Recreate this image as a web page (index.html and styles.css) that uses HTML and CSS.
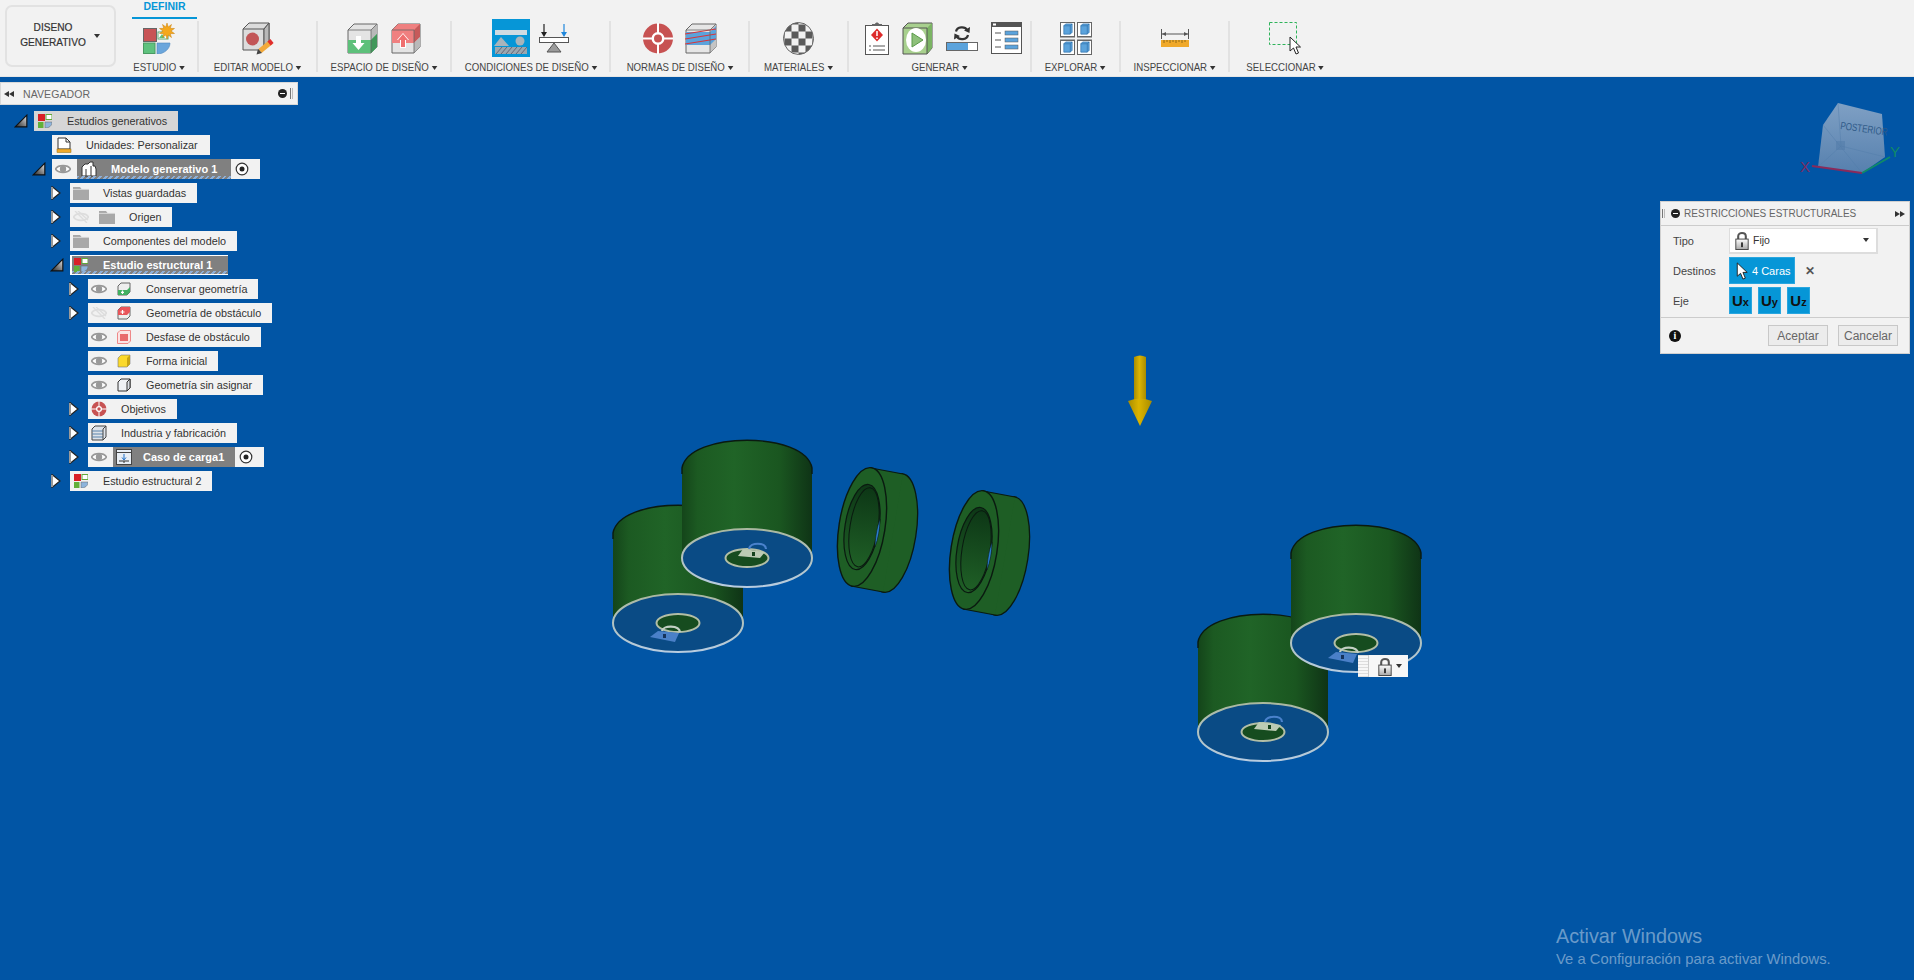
FILE: index.html
```html
<!DOCTYPE html>
<html lang="es">
<head>
<meta charset="utf-8">
<title>Diseño generativo</title>
<link rel="stylesheet" href="styles.css">
</head>
<body>
<svg class="defs" width="0" height="0" aria-hidden="true">
  <defs>
    <symbol id="eye" viewBox="0 0 16 12"><path d="M0.5 6C3 1.5 13 1.5 15.5 6C13 10.5 3 10.5 0.5 6Z" fill="#fff" stroke="#999" stroke-width="1.6"/><circle cx="8" cy="6" r="3.2" fill="#999"/></symbol>
    <symbol id="eye-off" viewBox="0 0 16 12"><path d="M0.5 6C3 1.5 13 1.5 15.5 6C13 10.5 3 10.5 0.5 6Z" fill="#f1f1f1" stroke="#ddd" stroke-width="1.6"/><path d="M2 0L14 12M5 0L15 9" stroke="#ddd" stroke-width="1.4"/></symbol>
    <symbol id="folder" viewBox="0 0 16 14"><path d="M0 1H7L8.5 3H16V14H0Z" fill="#a8a8a8"/><path d="M0 3.4H16" stroke="#d8d8d8"/></symbol>
    <symbol id="open" viewBox="0 0 12 12" preserveAspectRatio="xMinYMid meet"><path d="M1 11L11 1V11Z" fill="url(#tri)" stroke="#111"/></symbol>
    <symbol id="closed" viewBox="0 0 11 14" preserveAspectRatio="xMinYMid meet"><path d="M2 0.5L10 7L2 13.500Z" fill="#fff" stroke="#222" stroke-width="1.2"/><path d="M2 1V13" stroke="#999" stroke-width="2"/></symbol>
    <symbol id="study" viewBox="0 0 14 14"><rect width="7" height="7" fill="#d92027"/><rect x="8" y="0.5" width="6" height="5" fill="#fff" stroke="#62a83a"/><rect y="8" width="5.5" height="6" fill="#62b03a"/><path d="M7 8H14C14 12 11 14 7 14Z" fill="#8db4dc" stroke="#666" stroke-width=".5"/></symbol>
    <symbol id="radio" viewBox="0 0 14 14"><circle cx="7" cy="7" r="5.8" fill="#fff" stroke="#333" stroke-width="1.2"/><circle cx="7" cy="7" r="2.5" fill="#222"/></symbol>
    <symbol id="lock" viewBox="0 0 14 20"><path d="M3 9V5.500C3 1 11 1 11 5.500V9" fill="none" stroke="#555" stroke-width="2.2"/><rect x="0.5" y="8.5" width="13" height="11" fill="url(#lockf)" stroke="#444"/><rect x="6" y="12" width="2" height="5" fill="#333"/></symbol>
    <symbol id="cursor" viewBox="0 0 12 19"><path d="M1 1V15L4.5 12L7 18L9.5 17L7 11H11.5Z" fill="#fff" stroke="#222" stroke-width="1"/></symbol>
    <symbol id="blue-cube" viewBox="0 0 14 14"><rect width="14" height="14" fill="#fff"/><path d="M3 3L5 1H12V10L10 12H3Z" fill="#5ba3dc" stroke="#2d6fa8" stroke-width=".7"/><path d="M3 3H10V12M10 3L12 1" fill="none" stroke="#2d6fa8" stroke-width=".7"/></symbol>
    <linearGradient id="tri" x1="0" y1="1" x2="1" y2="0"><stop offset="0" stop-color="#222"/><stop offset="1" stop-color="#e8e8e8"/></linearGradient>
    <linearGradient id="lockf" x1="0" y1="0" x2="0" y2="1"><stop offset="0" stop-color="#fff"/><stop offset="1" stop-color="#a8a8a8"/></linearGradient>
  </defs>
</svg>

<header class="toolbar">
  <div class="home">
    <button class="workspace"><span>DISENO<br>GENERATIVO</span><i class="caret wcaret"></i></button>
  </div>

  <section class="group g1">
    <div class="tab">DEFINIR</div>
    <div class="icons">
      <svg width="32" height="31" viewBox="0 0 32 31"><rect x=".5" y="5.5" width="13" height="13" fill="#c85456" stroke="#666"/><rect x="15" y="9" width="10" height="7" fill="#fff" stroke="#5fa870"/><path d="M16 15L19 11L22 15Z" fill="#5fc27e"/><rect x=".5" y="20" width="11.5" height="10.5" fill="#5fc27e" stroke="#4a9a62"/><path d="M14 20H27C27 26 21 31 14 31Z" fill="#6ba6dc" stroke="#4d86bd" stroke-width=".6"/><path d="M24 0L25.2 4L28.5 1.5L27.2 5.3L31.5 5.5L28 8L31.5 10.5L27.2 10.7L28.5 14.5L25.2 12L24 16L22.8 12L19.5 14.5L20.8 10.7L16.5 10.5L20 8L16.5 5.5L20.8 5.3L19.5 1.5L22.8 4Z" fill="#f5a81c" stroke="#c87f0a" stroke-width=".5"/></svg>
    </div>
    <div class="label">ESTUDIO<i class="caret"></i></div>
  </section>
  <div class="sep"></div>

  <section class="group g2">
    <div class="icons">
      <svg width="32" height="33" viewBox="0 0 32 33"><path d="M1 7L7 1H27V22L22 28H1Z" fill="#dcdcdc" stroke="#555"/><path d="M22 7H1M22 7V28M22 7L27 1" fill="none" stroke="#555"/><path d="M22 7L27 1V22L22 28Z" fill="#b8b8b8" stroke="#555"/><circle cx="10.500" cy="17" r="6.500" fill="#c25556"/><path d="M29 20L18 29" stroke="#f2a93b" stroke-width="5"/><path d="M30 19L27 21.500" stroke="#e02d2d" stroke-width="5"/><path d="M14.500 32.500L16 27L20 31Z" fill="#444"/></svg>
    </div>
    <div class="label">EDITAR MODELO<i class="caret"></i></div>
  </section>
  <div class="sep"></div>

  <section class="group g3">
    <div class="icons gap13">
      <svg width="31" height="31" viewBox="0 0 31 31"><path d="M1 7L7 1H30V24L24 30H1Z" fill="#e4e4e4" stroke="#666"/><path d="M24 7L30 1V24L24 30Z" fill="#b9b9b9"/><path d="M1 17H24L30 11V24L24 30H1Z" fill="#5dc07a"/><path d="M24 17L30 11V24L24 30Z" fill="#41975a"/><path d="M1 7H24V30M24 7L30 1" fill="none" stroke="#666" stroke-width=".8"/><path d="M9 13H14V20H17.500L11.500 27L5.500 20H9Z" fill="#fff"/></svg>
      <svg width="30" height="31" viewBox="0 0 30 31"><path d="M1 7L7 1H29V24L23 30H1Z" fill="#e4e4e4" stroke="#666"/><path d="M1 7L7 1H29V14L23 20H1Z" fill="#ef8080"/><path d="M23 7L29 1V14L23 20Z" fill="#c65a5a"/><path d="M23 20L29 14V24L23 30Z" fill="#b9b9b9"/><path d="M1 7H23V30" fill="none" stroke="#666" stroke-width=".8"/><path d="M12 10L18 17H15V25H9V17H6Z" fill="#fff"/><path d="M10 24V17H7L12 11L17 17H14V24Z" fill="#ef7070"/></svg>
    </div>
    <div class="label">ESPACIO DE DISEÑO<i class="caret"></i></div>
  </section>
  <div class="sep"></div>

  <section class="group g4">
    <div class="icons gap9">
      <svg width="38" height="38" viewBox="0 0 38 38"><rect width="38" height="38" fill="#0696d7"/><rect x="3" y="11" width="32" height="5" fill="#cfdbe2"/><path d="M9 18L17 27H2Z" fill="#a8b4bb"/><circle cx="28" cy="22" r="4.500" fill="#a8b4bb"/><rect x="3" y="28" width="32" height="7" fill="#9aa8b0"/><path d="M4 35L10 28M9 35L15 28M14 35L20 28M19 35L25 28M24 35L30 28M29 35L35 28" stroke="#667" stroke-width="1"/></svg>
      <svg width="30" height="30" viewBox="0 0 30 30"><path d="M5 1V12" stroke="#222" stroke-width="1.200"/><path d="M2 9H8L5 14Z" fill="#222"/><path d="M25 1V12" stroke="#1f87dc" stroke-width="1.200"/><path d="M22 9H28L25 14Z" fill="#1f87dc"/><rect x=".5" y="14.500" width="29" height="5" fill="#fff" stroke="#555"/><path d="M15 20L22 29H8Z" fill="#9a9a9a" stroke="#555"/></svg>
    </div>
    <div class="label">CONDICIONES DE DISEÑO<i class="caret"></i></div>
  </section>
  <div class="sep"></div>

  <section class="group g5">
    <div class="icons gap12">
      <svg width="30" height="31" viewBox="0 0 30 31"><circle cx="15" cy="15.500" r="15" fill="#c75252"/><path d="M15 0V31M0 15.500H30" stroke="#fff" stroke-width="2"/><circle cx="15" cy="15.500" r="6.500" fill="#fff"/><circle cx="15" cy="15.500" r="4" fill="#c75252"/></svg>
      <svg width="32" height="31" viewBox="0 0 32 31"><path d="M1 7L7 1H31V24L25 30H1Z" fill="#e6e6e6" stroke="#666"/><path d="M25 7L31 1V24L25 30Z" fill="#c4c4c4"/><path d="M1 9H25L31 3V16L25 22H1Z" fill="#5ba3dc"/><path d="M0 11L31 6M0 16L31 11M0 21L31 16" stroke="#d8343a" stroke-width="1.100"/><path d="M1 7H25V30M25 7L31 1" fill="none" stroke="#666" stroke-width=".8"/></svg>
    </div>
    <div class="label">NORMAS DE DISEÑO<i class="caret"></i></div>
  </section>
  <div class="sep"></div>

  <section class="group g6">
    <div class="icons">
      <svg width="33" height="33" viewBox="0 0 33 33"><defs><pattern id="chk" width="14" height="14" patternUnits="userSpaceOnUse" x="2.500" y="2.500"><rect width="14" height="14" fill="#f2f2f2"/><rect width="7" height="7" fill="#5a5a5a"/><rect x="7" y="7" width="7" height="7" fill="#5a5a5a"/></pattern></defs><ellipse cx="16.500" cy="16.500" rx="15" ry="16" fill="url(#chk)" stroke="#666"/></svg>
    </div>
    <div class="label">MATERIALES<i class="caret"></i></div>
  </section>
  <div class="sep"></div>

  <section class="group g7">
    <div class="icons gen">
      <svg width="24" height="33" viewBox="0 0 24 33"><rect x=".5" y="3.500" width="23" height="29" fill="#fff" stroke="#555"/><path d="M7 4V2H10C10.500 0 13.500 0 14 2H17V4Z" fill="#666"/><path d="M12 6.500L18 13L12 19.500L6 13Z" fill="#dd2a2a"/><path d="M12 9V14M12 15.500V17" stroke="#fff" stroke-width="1.500"/><path d="M4 24H6M8 24H20M4 28H6M8 28H20" stroke="#555"/></svg>
      <svg width="31" height="33" viewBox="0 0 31 33"><path d="M1 6L6 1H30V26L25 32H1Z" fill="#a8d08e" stroke="#555"/><path d="M25 6L30 1V26L25 32Z" fill="#7bb464"/><path d="M1 6H25V32" fill="none" stroke="#555"/><ellipse cx="14" cy="18" rx="10" ry="12" fill="#fff"/><path d="M10 11L21 18L10 25Z" fill="#8ec07a" stroke="#5a9a4a"/></svg>
      <svg width="32" height="26" viewBox="0 0 32 26"><path d="M10 6.500C11 1.500 19 1 21 5M22 10C21 15 13 15.500 11 11.500" fill="none" stroke="#333" stroke-width="2.200"/><path d="M18 5.500L24 2L23.500 8Z" fill="#333"/><path d="M14 11L8 14.500L8.500 8.500Z" fill="#333"/><rect x=".5" y="17.500" width="31" height="8" fill="#fff" stroke="#666"/><rect x="1" y="18" width="21" height="7" fill="#5ba3dc"/></svg>
      <svg width="31" height="32" viewBox="0 0 31 32"><rect x=".5" y=".5" width="30" height="31" fill="#fff" stroke="#555"/><rect width="31" height="5" fill="#555"/><rect x="2" y="1.500" width="3" height="2" fill="#fff"/><path d="M4 11H10M4 18H10M4 25H10" stroke="#555" stroke-width="1.200"/><rect x="14" y="9" width="13" height="4" fill="#5ba3dc" stroke="#555" stroke-width=".5"/><rect x="14" y="16" width="13" height="4" fill="#5ba3dc" stroke="#555" stroke-width=".5"/><rect x="14" y="23" width="13" height="4" fill="#5ba3dc" stroke="#555" stroke-width=".5"/></svg>
    </div>
    <div class="label">GENERAR<i class="caret"></i></div>
  </section>
  <div class="sep"></div>

  <section class="group g8">
    <div class="icons">
      <svg width="32" height="33" viewBox="0 0 32 33"><rect x="0" y="0" width="32" height="33" fill="#666"/><rect x="15" y="0" width="2" height="33" fill="#f1f1f1"/><rect x="0" y="15.500" width="32" height="2" fill="#f1f1f1"/><use href="#blue-cube" x="1" y="1" width="13" height="13"/><use href="#blue-cube" x="18" y="1" width="13" height="13"/><use href="#blue-cube" x="1" y="19" width="13" height="13"/><use href="#blue-cube" x="18" y="19" width="13" height="13"/></svg>
    </div>
    <div class="label">EXPLORAR<i class="caret"></i></div>
  </section>
  <div class="sep"></div>

  <section class="group g9">
    <div class="icons">
      <svg width="28" height="18" viewBox="0 0 28 18"><path d="M.5 0V10M27.500 0V10" stroke="#555"/><path d="M1 5H27" stroke="#555"/><path d="M1 5L5 3V7ZM27 5L23 3V7Z" fill="#555"/><rect y="11" width="28" height="7" fill="#f0a92a"/><path d="M3 11V14M6 11V13M9 11V14M12 11V13M15 11V14M18 11V13M21 11V14M24 11V13" stroke="#7a5a10" stroke-width=".8"/></svg>
    </div>
    <div class="label">INSPECCIONAR<i class="caret"></i></div>
  </section>
  <div class="sep"></div>

  <section class="group g10">
    <div class="icons">
      <svg width="32" height="33" viewBox="0 0 32 33"><rect x=".5" y=".5" width="27" height="22" fill="none" stroke="#2eb35a" stroke-dasharray="3 2"/><path d="M21 15V29L24.500 26L27 32L29.500 31L27 25H31.500Z" fill="#fff" stroke="#222"/></svg>
    </div>
    <div class="label">SELECCIONAR<i class="caret"></i></div>
  </section>
</header>

<main class="viewport">
  <svg class="scene" viewBox="0 77 1914 903" preserveAspectRatio="none">
    <defs>
      <linearGradient id="body" x1="0" y1="0" x2="1" y2="0">
        <stop offset="0" stop-color="#14451a"/><stop offset=".12" stop-color="#1c5a22"/><stop offset=".4" stop-color="#206427"/><stop offset=".75" stop-color="#1a5620"/><stop offset="1" stop-color="#0f3416"/>
      </linearGradient>
      <linearGradient id="edge" x1="0" y1="0" x2="0" y2="1">
        <stop offset="0" stop-color="#aab8a0"/><stop offset="1" stop-color="#b8cce0"/>
      </linearGradient>
      <linearGradient id="hollow" x1="0" y1="0" x2="0" y2="1">
        <stop offset="0" stop-color="#0d3716"/><stop offset="1" stop-color="#1f5f26"/>
      </linearGradient>
      <linearGradient id="gold" x1="0" y1="0" x2="1" y2="0">
        <stop offset="0" stop-color="#a88c00"/><stop offset=".45" stop-color="#dcb400"/><stop offset="1" stop-color="#a88c00"/>
      </linearGradient>
      <linearGradient id="cube" x1="0" y1="0" x2="0" y2="1">
        <stop offset="0" stop-color="#7fa0c4"/><stop offset="1" stop-color="#5680ae"/>
      </linearGradient>
      <g id="cyl">
        <path d="M-65 -90C-58 -127 58 -127 65 -90V0H-65Z" fill="url(#body)"/>
        <path d="M-65 -84V-90C-58 -127 58 -127 65 -90V-84" fill="none" stroke="#0a1a10" stroke-width="1.400"/>
        <ellipse rx="65" ry="29" fill="#0a4b85" stroke="url(#edge)" stroke-width="2"/>
        <ellipse rx="21.500" ry="9" fill="#164c1f" stroke="#b2bea6" stroke-width="2"/>
      </g>
      <g id="ring">
        <ellipse cx="31" cy="6" rx="23" ry="60" transform="rotate(9 31 6)" fill="#1e5e25" stroke="#0a1a10" stroke-width="1.300"/>
        <path d="M9 -59L41 -53L21 65L-11 59Z" fill="#1e5e25"/>
        <path d="M9 -59L41 -53M21 65L-11 59" stroke="#0a1a10" stroke-width="1.200"/>
        <ellipse rx="23" ry="60" transform="rotate(9)" fill="#1e5e25" stroke="#0a1a10" stroke-width="1.400"/>
        <ellipse rx="17" ry="43" transform="rotate(9)" fill="url(#hollow)" stroke="#0a1a10" stroke-width="1.200"/>
        <ellipse cx="2" rx="14" ry="40" transform="rotate(9)" fill="url(#hollow)" stroke="#0a1a10" stroke-width="1"/>
        <path d="M18 -8C15 0 13 12 13 20C16 12 18 2 18 -8Z" fill="#2a7ed0" stroke="#0a1a10" stroke-width=".5"/>
      </g>
      <g id="lock-a">
        <path d="M-3 -4C-2 -11 14 -11 14 -4" fill="none" stroke="#4a82cc" stroke-width="2.200"/>
        <path d="M-14 3L-9 -4L13 -1L8 5Z" fill="#bccbb4"/>
        <rect x="0" y="-1" width="3" height="4" fill="#15431d"/>
      </g>
      <g id="lock-b">
        <path d="M-3 -3C-2 -9 14 -9 15 -2" fill="none" stroke="#c3d0c4" stroke-width="2.200"/>
        <path d="M-15 3L-7 -3L14 -1L10 8Z" fill="#4a80c8"/>
        <rect x="-2" y="0" width="3" height="4" fill="#15335d"/>
      </g>
    </defs>

    <use href="#cyl" x="678" y="623"/>
    <use href="#lock-b" x="665" y="634"/>
    <use href="#cyl" x="747" y="558"/>
    <use href="#lock-a" x="752" y="553"/>
    <use href="#ring" x="862" y="527"/>
    <use href="#ring" x="974" y="550"/>
    <use href="#cyl" x="1263" y="732"/>
    <use href="#lock-a" x="1268" y="726"/>
    <use href="#cyl" x="1356" y="643"/>
    <use href="#lock-b" x="1343" y="655"/>

    <path d="M1134 357Q1140 354 1146 357V400H1134Z" fill="url(#gold)"/>
    <path d="M1128 401Q1140 396 1152 401L1140 426Z" fill="url(#gold)"/>

    <path d="M1838 103L1882 114L1885 157L1862 173L1818 167L1823 125Z" fill="url(#cube)"/>
    <path d="M1838 103L1841 146L1885 157M1841 146L1818 167M1823 125L1862 173" fill="none" stroke="#4f7aa8" stroke-width=".6" opacity=".7"/>
    <rect x="1836" y="141" width="9" height="9" fill="#4f7aa8" opacity=".5"/>
    <text class="cube-text" transform="translate(1840 129) rotate(8) scale(.85 1.1)">POSTERIOR</text>
    <path d="M1812 166L1862 173" stroke="#8a2a5a" stroke-width="2"/>
    <path d="M1862 173L1890 157" stroke="#108a68" stroke-width="2"/>
    <text class="axis axis-x" x="1800" y="172">X</text>
    <text class="axis axis-y" x="1890" y="157">Y</text>
  </svg>

  <aside class="navigator">
    <div class="nav-head">
      <span class="arrows"><i></i><i></i></span>
      <span class="nav-title">NAVEGADOR</span>
      <span class="minus"></span>
      <span class="grip"></span>
    </div>
    <div class="tree">
      <div class="row l0"><svg class="exp"><use href="#open"/></svg>
        <div class="pill pad-study"><svg class="ic14"><use href="#study"/></svg><span class="t33">Estudios generativos</span></div></div>
      <div class="row l1"><span class="exp"></span>
        <div class="pill pad-unit"><svg class="ic16" viewBox="0 0 16 16"><path d="M2 1H10L14 5V12H2Z" fill="#fff" stroke="#333"/><path d="M10 1V5H14" fill="none" stroke="#333"/><rect x="1" y="12" width="14" height="3.500" fill="#f0a92a" stroke="#8a6a10" stroke-width=".5"/></svg><span class="t14">Unidades: Personalizar</span></div></div>
      <div class="row l1"><svg class="exp"><use href="#open"/></svg>
        <div class="pill pad-eye"><svg class="eye"><use href="#eye"/></svg>
          <div class="dark dk-model"><svg class="ic16" viewBox="0 0 16 16"><path d="M1 6L4 3H7L9 1H12V5H14L15 8V15H1Z" fill="#fff" stroke="#333"/><path d="M5 8V15M10 5V15" stroke="#333"/></svg><b>Modelo generativo 1</b></div>
          <svg class="radio"><use href="#radio"/></svg></div></div>
      <div class="row l2"><svg class="exp"><use href="#closed"/></svg>
        <div class="pill pad-f"><svg class="folder"><use href="#folder"/></svg><span class="t14">Vistas guardadas</span></div></div>
      <div class="row l2"><svg class="exp"><use href="#closed"/></svg>
        <div class="pill pad-f"><svg class="eye"><use href="#eye-off"/></svg><svg class="folder mid"><use href="#folder"/></svg><span class="t14">Origen</span></div></div>
      <div class="row l2"><svg class="exp"><use href="#closed"/></svg>
        <div class="pill pad-f"><svg class="folder"><use href="#folder"/></svg><span class="t14">Componentes del modelo</span></div></div>
      <div class="row l2"><svg class="exp"><use href="#open"/></svg>
        <div class="pill pad-dk"><div class="dark dk-study"><svg class="ic14"><use href="#study"/></svg><b>Estudio estructural 1</b></div></div></div>
      <div class="row l3"><svg class="exp"><use href="#closed"/></svg>
        <div class="pill pad-eye"><svg class="eye"><use href="#eye"/></svg><svg class="ic14 mid" viewBox="0 0 14 14"><path d="M1 4L4 1H13V10L10 13H1Z" fill="#eee" stroke="#666"/><path d="M1 8H10L13 5V10L10 13H1Z" fill="#41b060"/><path d="M5.500 8.500V12M4 10.300H7" stroke="#fff" stroke-width="1.200"/></svg><span class="t15">Conservar geometría</span></div></div>
      <div class="row l3"><svg class="exp"><use href="#closed"/></svg>
        <div class="pill pad-eye"><svg class="eye"><use href="#eye-off"/></svg><svg class="ic14 mid" viewBox="0 0 14 14"><path d="M1 4L4 1H13V10L10 13H1Z" fill="#eee" stroke="#666"/><path d="M1 4L4 1H13V6L10 9H1Z" fill="#e8555a"/><path d="M5.500 4V8M3.500 6H7.500" stroke="#fff" stroke-width="1.200"/></svg><span class="t15">Geometría de obstáculo</span></div></div>
      <div class="row l3"><span class="exp"></span>
        <div class="pill pad-eye"><svg class="eye"><use href="#eye"/></svg><svg class="ic14 mid" viewBox="0 0 14 14"><path d="M.5 3L3 .5H13.500V11L11 13.500H.5Z" fill="#fbe4e4" stroke="#e88"/><rect x="3" y="4" width="8" height="7" fill="#e86a6c"/></svg><span class="t15">Desfase de obstáculo</span></div></div>
      <div class="row l3"><span class="exp"></span>
        <div class="pill pad-eye"><svg class="eye"><use href="#eye"/></svg><svg class="ic14 mid" viewBox="0 0 14 14"><path d="M1 4L4 1H13V10L10 13H1Z" fill="#fbd92a" stroke="#777" stroke-width=".6"/><path d="M10 4L13 1V10L10 13Z" fill="#c8a512"/></svg><span class="t15">Forma inicial</span></div></div>
      <div class="row l3"><span class="exp"></span>
        <div class="pill pad-eye"><svg class="eye"><use href="#eye"/></svg><svg class="ic14 mid" viewBox="0 0 14 14"><path d="M1 4L4 1H13V10L10 13H1Z" fill="#eef1f5" stroke="#333"/><path d="M10 4L13 1V10L10 13Z" fill="#d8dde4" stroke="#333"/></svg><span class="t15">Geometría sin asignar</span></div></div>
      <div class="row l3"><svg class="exp"><use href="#closed"/></svg>
        <div class="pill pad-eye"><svg class="ic16" viewBox="0 0 16 16"><circle cx="8" cy="8" r="7.500" fill="#c75252"/><path d="M8 0V16M0 8H16" stroke="#fff"/><circle cx="8" cy="8" r="3" fill="#fff"/><circle cx="8" cy="8" r="1.700" fill="#c75252"/></svg><span class="t15b">Objetivos</span></div></div>
      <div class="row l3"><svg class="exp"><use href="#closed"/></svg>
        <div class="pill pad-eye"><svg class="ic16" viewBox="0 0 16 16"><path d="M1 4L4 1H15V12L12 15H1Z" fill="#dde2e8" stroke="#444"/><path d="M1 6H12M1 9H12M1 12H12" stroke="#5b83ac" stroke-width="1.200"/><path d="M12 4V15M12 4L15 1" stroke="#444" fill="none"/></svg><span class="t15b">Industria y fabricación</span></div></div>
      <div class="row l3"><svg class="exp"><use href="#closed"/></svg>
        <div class="pill pad-eye"><svg class="eye"><use href="#eye"/></svg>
          <div class="dark dk-load"><svg class="ic16" viewBox="0 0 16 16"><rect x=".5" y=".5" width="15" height="15" fill="#e8eef5" stroke="#444"/><path d="M0 3.500H16" stroke="#444"/><path d="M8 5V10M6 8.500L8 11L10 8.500" stroke="#2170c8" fill="none"/><path d="M3 12H13M8 12V14" stroke="#333"/></svg><b>Caso de carga1</b></div>
          <svg class="radio"><use href="#radio"/></svg></div></div>
      <div class="row l2"><svg class="exp"><use href="#closed"/></svg>
        <div class="pill pad-f"><svg class="ic14 st2"><use href="#study"/></svg><span class="t15c">Estudio estructural 2</span></div></div>
    </div>
  </aside>

  <aside class="dialog">
    <div class="dlg-head">
      <span class="grip small"></span>
      <span class="minus"></span>
      <span class="dlg-title">RESTRICCIONES ESTRUCTURALES</span>
      <span class="arrows right"><i></i><i></i></span>
    </div>
    <div class="dlg-body">
      <div class="field f-tipo">
        <span class="name">Tipo</span>
        <div class="select"><svg class="lock"><use href="#lock"/></svg><span>Fijo</span><i class="caret sel"></i></div>
      </div>
      <div class="field f-dest">
        <span class="name">Destinos</span>
        <div class="picked"><svg class="curs"><use href="#cursor"/></svg><span>4 Caras</span></div>
        <span class="x">✕</span>
      </div>
      <div class="field f-eje">
        <span class="name">Eje</span>
        <div class="axes">
          <div class="ux">U<small>x</small></div>
          <div class="ux">U<small>y</small></div>
          <div class="ux">U<small>z</small></div>
        </div>
      </div>
    </div>
    <div class="dlg-foot">
      <span class="info">i</span>
      <button class="btn b-ok">Aceptar</button>
      <button class="btn b-cancel">Cancelar</button>
    </div>
  </aside>

  <div class="floating">
    <span class="dots"></span>
    <svg class="lock"><use href="#lock"/></svg>
    <i class="caret"></i>
  </div>

  <div class="watermark">
    <div class="wm1">Activar Windows</div>
    <div class="wm2">Ve a Configuración para activar Windows.</div>
  </div>
</main>
</body>
</html>
```

FILE: styles.css
```css
* { box-sizing: border-box; }
html, body { margin: 0; height: 100%; overflow: hidden; }
body {
  display: flex;
  flex-direction: column;
  width: 1914px;
  height: 980px;
  background: #0155a5;
  font-family: "Liberation Sans", Arial, sans-serif;
  color: #333;
}
.defs { position: absolute; }
svg { display: block; flex: none; }
i { display: block; }

/* toolbar */
.toolbar {
  display: flex;
  height: 77px;
  background: #f2f2f2;
  border-bottom: 1px solid #e6e6e6;
  flex: none;
}
.home { width: 120px; padding: 5px 0 0 5px; flex: none; }
.workspace {
  position: relative;
  display: block;
  width: 111px;
  height: 62px;
  background: #f2f2f2;
  border: 2px solid #e2e2e2;
  border-radius: 7px;
  padding: 0 17px 0 0;
  font: 11px/15px "Liberation Sans", sans-serif;
  color: #333;
  text-align: center;
}
.workspace span { display: block; transform: scaleX(.92); margin: 0 0 2px 2px; -webkit-text-stroke: .2px #333; }
.wcaret { position: absolute; right: 14px; top: 27px; }
.caret {
  width: 0; height: 0;
  border-left: 3px solid transparent;
  border-right: 3px solid transparent;
  border-top: 4px solid #333;
  flex: none;
}
.group {
  display: flex;
  flex-direction: column;
  align-items: center;
  padding-top: 19px;
  flex: none;
  position: relative;
}
.g1 { width: 77px; padding-top: 0; }
.g2 { width: 117px; }
.g3 { width: 132px; }
.g4 { width: 157px; }
.g5 { width: 137px; }
.g6 { width: 97px; }
.g7 { width: 181px; }
.g8 { width: 87px; }
.g9 { width: 107px; }
.g10 { width: 110px; }
.sep { width: 2px; height: 51px; margin-top: 21px; background: #e2e2e2; flex: none; }
.tab {
  width: 65px;
  height: 19px;
  margin-left: 12px;
  border-bottom: 2px solid #0696d7;
  color: #0696d7;
  font: bold 10.5px/13px "Liberation Sans Narrow", "Liberation Sans", sans-serif;
  text-align: center;
}
.icons {
  display: flex;
  align-items: center;
  justify-content: center;
  height: 38px;
  gap: 12px;
}
.gap13 { gap: 13px; }
.gap9 { gap: 9px; }
.gen { gap: 13px; padding-left: 8px; }
.label {
  display: flex;
  align-items: center;
  gap: 3px;
  margin-top: 4px;
  height: 13px;
  white-space: nowrap;
  font: 10.5px/13px "Liberation Sans Narrow", "Liberation Sans", sans-serif;
  color: #444;
  transform: scaleX(.92);
}

/* viewport */
.viewport { position: relative; flex: 1; overflow: hidden; background: #0155a5; }
.scene { position: absolute; inset: 0; width: 100%; height: 100%; }
.cube-text { font: 9.5px "Liberation Sans", sans-serif; fill: #2f5a88; }
.axis { font: 15px "Liberation Sans Narrow", "Liberation Sans", sans-serif; }
.axis-x { fill: #7a2c62; }
.axis-y { fill: #108a68; }

/* navigator */
.navigator { position: absolute; left: 0; top: 5px; width: 298px; }
.nav-head {
  display: flex;
  align-items: center;
  height: 23px;
  background: #f2f2f2;
  border: 1px solid #d8d8d8;
  padding: 0 4px 0 3px;
}
.arrows { display: flex; width: 10px; }
.arrows i {
  width: 0; height: 0;
  border-top: 3.5px solid transparent;
  border-bottom: 3.5px solid transparent;
  border-right: 5px solid #333;
}
.arrows.right i { border-right: 0; border-left: 5px solid #333; }
.nav-title { margin-left: 9px; font-size: 10.5px; color: #666; flex: 1; letter-spacing: .1px; }
.minus { position: relative; width: 9px; height: 9px; border-radius: 50%; background: #222; flex: none; }
.minus::after { content: ""; position: absolute; left: 2px; right: 2px; top: 4px; height: 1px; background: #fff; }
.grip { width: 3px; height: 11px; margin-left: 3px; border-left: 1px solid #777; border-right: 1px solid #bbb; flex: none; }

.tree { display: flex; flex-direction: column; gap: 4px; margin-top: 6px; }
.row { display: flex; align-items: center; height: 20px; }
.l0 { padding-left: 14px; }
.l1 { padding-left: 32px; }
.l2 { padding-left: 50px; }
.l3 { padding-left: 68px; }
.exp { width: 20px; height: 14px; flex: none; }
.pill {
  display: flex;
  align-items: center;
  height: 20px;
  background: #f2f2f2;
  font-size: 10.8px;
  color: #333;
  white-space: nowrap;
  padding-right: 11px;
}
.pad-study { background: #d6d6d6; padding-left: 4px; }
.pad-unit { padding-left: 4px; padding-right: 12px; }
.pad-eye { padding-left: 3px; }
.pad-f { padding-left: 3px; }
.pad-dk { padding-left: 2px; padding-right: 0; background: #fff; }
.ic14 { width: 14px; height: 14px; }
.ic16 { width: 16px; height: 16px; }
.eye { width: 16px; height: 12px; }
.folder { width: 16px; height: 14px; }
.radio { width: 14px; height: 14px; margin-left: 4px; }
.mid { margin-left: 10px; }
.st2 { margin-left: 1px; }
.t33 { margin-left: 15px; }
.t14 { margin-left: 14px; }
.t15 { margin-left: 15px; }
.t15b { margin-left: 14px; }
.t15c { margin-left: 15px; }
.dark {
  position: relative;
  display: flex;
  align-items: center;
  height: 20px;
  background: #808080;
  color: #fff;
  flex: none;
}
.dark b { font-weight: 700; font-size: 11px; }
.dark::after {
  content: "";
  position: absolute;
  left: 0; right: 0; bottom: 0;
  height: 3px;
  background: repeating-linear-gradient(135deg, #8fb0d8 0 2px, transparent 2px 4px);
}
.dk-model { margin-left: 6px; padding-left: 4px; width: 154px; }
.dk-model b { margin-left: 14px; }
.dk-study { padding-left: 2px; width: 156px; height: 18px; }
.dk-study b { margin-left: 15px; }
.dk-load { margin-left: 6px; padding-left: 3px; width: 122px; }
.dk-load b { margin-left: 11px; }
.dk-load::after { display: none; }

/* dialog */
.dialog {
  position: absolute;
  left: 1660px;
  top: 124px;
  width: 250px;
  height: 153px;
  display: flex;
  flex-direction: column;
  background: #f2f2f2;
  border: 1px solid #d0d0d0;
  font-size: 11px;
  color: #333;
}
.dlg-head {
  display: flex;
  align-items: center;
  height: 24px;
  padding: 0 4px 0 1px;
  border-bottom: 1px solid #ccc;
  flex: none;
}
.grip.small { margin: 0 6px 0 0; height: 9px; }
.dlg-title { margin-left: 4px; flex: 1; color: #666; font-size: 10px; }
.dlg-body { display: flex; flex-direction: column; flex: 1; padding-top: 1px; border-bottom: 1px solid #ccc; }
.field { display: flex; align-items: center; }
.f-tipo { height: 27px; }
.f-dest { height: 29px; margin-top: 2px; }
.f-eje { height: 27px; margin-top: 2px; }
.name { width: 56px; margin-left: 12px; color: #444; font-size: 11px; flex: none; }
.select {
  display: flex;
  align-items: center;
  width: 149px;
  height: 26px;
  background: #fff;
  border: 1px solid #ddd;
  border-width: 1px 2px 2px 1px;
  padding-left: 5px;
  font-size: 10.5px;
}
.select .lock { width: 14px; height: 19px; }
.select span { margin-left: 4px; flex: 1; }
.sel { margin-right: 7px; }
.picked {
  display: flex;
  align-items: center;
  width: 66px;
  height: 27px;
  background: #0696d7;
  border: 1px solid #29a6df;
  color: #fff;
  padding-left: 6px;
  font-size: 11px;
}
.curs { width: 12px; height: 18px; }
.picked span { margin-left: 4px; }
.x { margin-left: 10px; font-size: 12px; font-weight: bold; color: #555; }
.axes { display: flex; gap: 6px; }
.ux {
  width: 23px;
  height: 27px;
  background: #0696d7;
  border: 1px solid #29a6df;
  color: #111;
  font: bold 15px/25px "Liberation Sans Narrow", "Liberation Sans", sans-serif;
  text-align: center;
}
.ux small { font-size: 11px; }
.dlg-foot { display: flex; align-items: center; height: 35px; padding: 0 0 0 8px; flex: none; }
.info {
  width: 12px; height: 12px;
  border-radius: 50%;
  background: #111;
  color: #fff;
  font: bold 10px/12px "Liberation Serif", serif;
  text-align: center;
}
.btn {
  height: 21px;
  width: 60px;
  background: #ececec;
  border: 1px solid #c8c8c8;
  padding: 0;
  font: 12px "Liberation Sans", sans-serif;
  color: #666;
}
.b-ok { margin-left: 87px; }
.b-cancel { margin-left: 10px; }

/* floating lock */
.floating {
  position: absolute;
  left: 1358px;
  top: 578px;
  width: 50px;
  height: 22px;
  display: flex;
  align-items: center;
  background: #f7f7f7;
}
.dots { width: 11px; height: 100%; margin-right: 9px; background: repeating-linear-gradient(0deg, #ddd 0 1px, transparent 1px 3px); border-right: 1px solid #ccc; flex: none; }
.floating .lock { width: 14px; height: 19px; }
.floating .caret { margin-left: 4px; }

/* watermark */
.watermark { position: absolute; left: 1556px; top: 848px; color: rgba(255,255,255,.42); }
.wm1 { font: 19.8px/22px "Liberation Sans", sans-serif; }
.wm2 { font: 14.8px/18px "Liberation Sans", sans-serif; margin-top: 3px; }
```
